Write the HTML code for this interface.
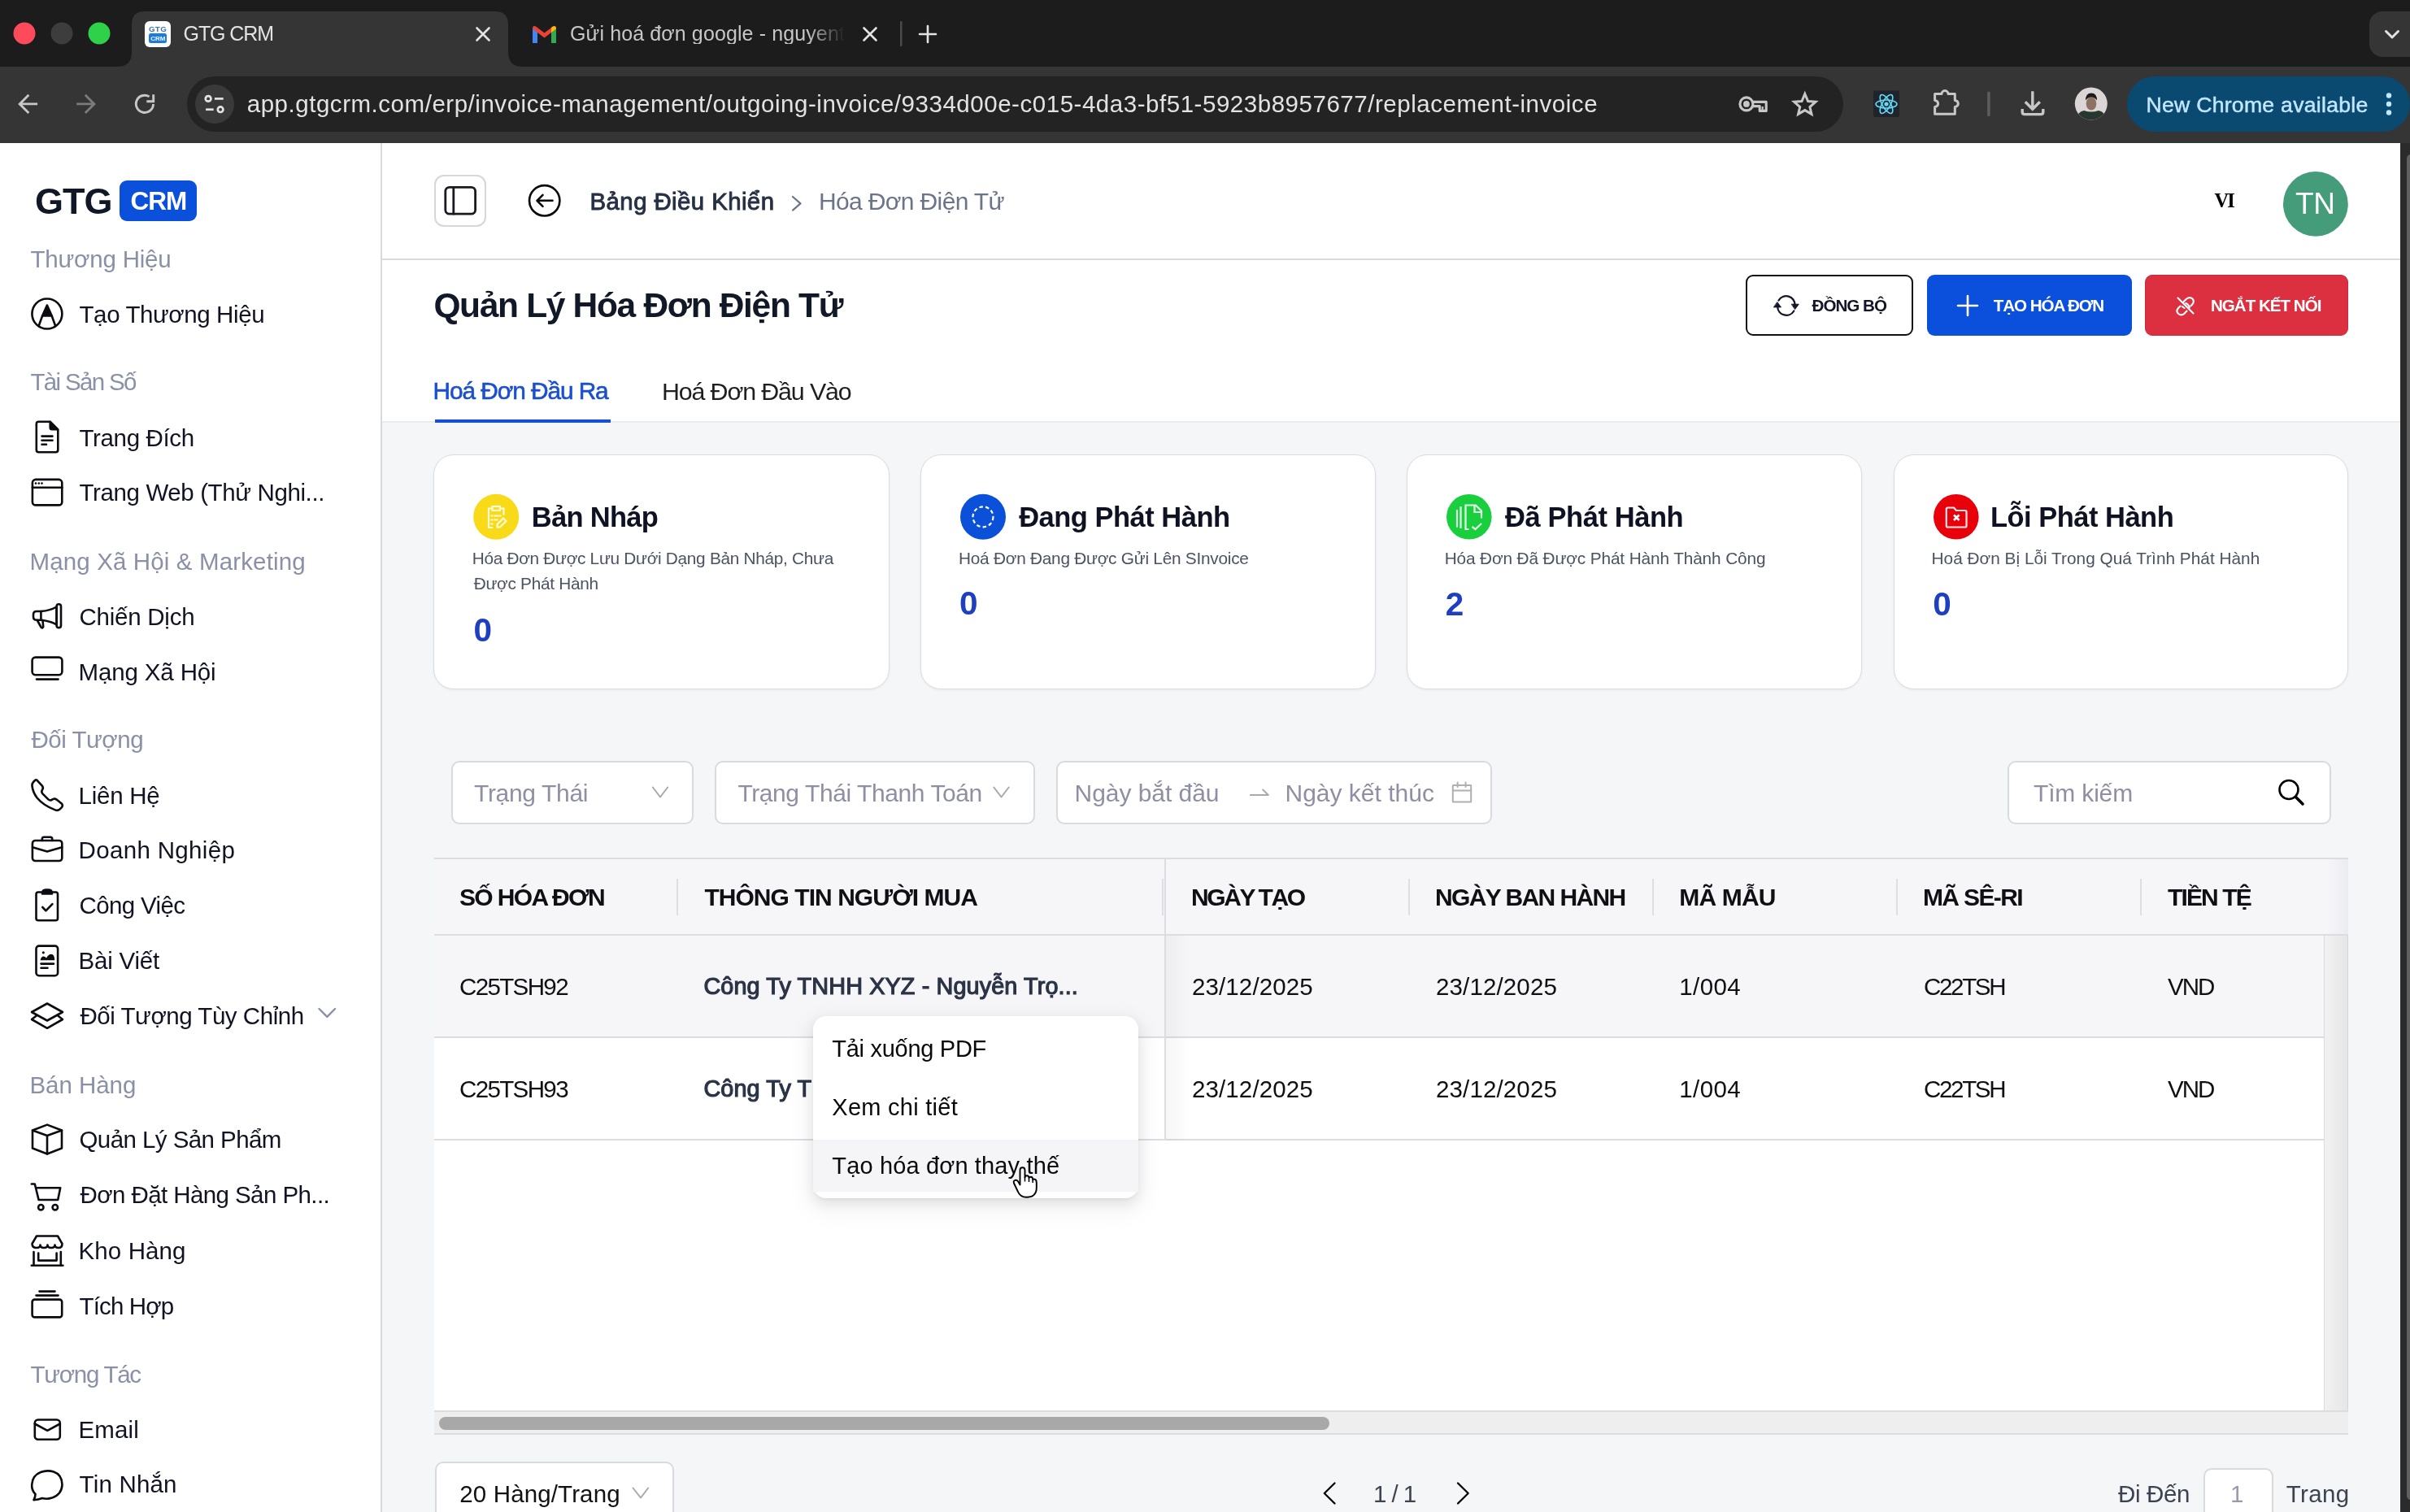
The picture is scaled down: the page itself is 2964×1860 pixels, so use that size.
<!DOCTYPE html><html><head><meta charset="utf-8"><style>
*{margin:0;padding:0;box-sizing:border-box}
html,body{width:2964px;height:1860px;overflow:hidden;background:#fff}
body{position:relative;font-family:'Liberation Sans',sans-serif}
.t{position:absolute;white-space:nowrap}
.b{position:absolute}
svg.ov{position:absolute;left:0;top:0}
.root{position:absolute;left:0;top:0;width:2964px;height:1860px;overflow:hidden;will-change:transform}
</style></head><body><div class="root"><div class="b" style="left:0px;top:0px;width:2964px;height:82px;background:#1c1c1c"></div>
<div class="b" style="left:0px;top:82px;width:2964px;height:94px;background:#353535"></div>
<svg class="ov" width="700" height="82" style="left:0;top:0"><path d="M144 82 Q162 82 162 64 V30 Q162 14 178 14 H609 Q625 14 625 30 V64 Q625 82 643 82 Z" fill="#353535"/></svg>
<svg class="ov" width="160" height="82"><circle cx="30" cy="41" r="13.5" fill="#ff4a5c"/><circle cx="76" cy="41" r="13.5" fill="#3d3d3d"/><circle cx="122" cy="41" r="13.5" fill="#2fd14a"/></svg>
<div class="b" style="left:178px;top:26px;width:32px;height:32px;background:#fff;border-radius:6px"></div>
<div class="t" style="left:182px;top:30.5px;width:24px;text-align:center;font-size:9.8px;line-height:10px;font-weight:700;color:#3d74b8;letter-spacing:0.3px">GTG</div>
<div class="b" style="left:183.4px;top:41.4px;width:21.69999999999999px;height:11.300000000000004px;background:#1f7ae0;border-radius:2.5px"></div>
<div class="t" style="left:183.4px;top:42.6px;width:21.7px;text-align:center;font-size:8px;line-height:9px;font-weight:700;color:#e8fbff">CRM</div>
<div class="t" style="left:225.5px;top:28.6px;font-size:25px;line-height:25px;letter-spacing:-1.066px;color:#e3e3e3;">GTG CRM</div>
<svg class="ov" width="1200" height="82"><g stroke="#e3e3e3" stroke-width="2.6" stroke-linecap="round"><path d="M586.5 34.5 L601.5 49.5 M601.5 34.5 L586.5 49.5"/><path d="M1062.5 34.5 L1077.5 49.5 M1077.5 34.5 L1062.5 49.5"/><path d="M1141 32 V52 M1131 42 H1151"/></g><rect x="1107" y="26" width="2.5" height="31" rx="1" fill="#4a4a4a"/><path d="M655 53 V35 Q655 31 659 32.5 L669.5 40.5 L680 32.5 Q684 31 684 35 V53 H678 V40 L669.5 46.5 L661 40 V53 Z" fill="#ea4335"/><path d="M655 35 V53 H661 V40 Z" fill="#4285f4"/><path d="M684 35 V53 H678 V40 Z" fill="#34a853"/><path d="M678 40 L684 35.5 Q684 31 680 32.5 L678 34 Z" fill="#fbbc04"/></svg>
<div class="t" style="left:701.0px;top:28.6px;font-size:25px;line-height:25px;letter-spacing:0.115px;color:#c7c7c7;-webkit-mask-image:linear-gradient(90deg,#000 0,#000 292px,transparent 338px);">Gửi hoá đơn google - nguyenthanh</div>
<div class="b" style="left:2914px;top:14px;width:66px;height:56px;background:#353535;border-radius:16px"></div>
<svg class="ov" width="2964" height="82"><path d="M2934.5 38.5 L2942 46 L2949.5 38.5" stroke="#e3e3e3" stroke-width="3" fill="none" stroke-linecap="round" stroke-linejoin="round"/></svg>
<svg class="ov" width="2964" height="176"><g fill="none" stroke-linejoin="miter"><path d="M46.1 127.9 H24 M35.3 116.8 L24.2 127.9 L35.3 139.1" stroke="#c7c7c7" stroke-width="2.9"/><path d="M94.2 127.9 H116 M104.8 116.8 L115.9 127.9 L104.8 139.1" stroke="#7b7b7b" stroke-width="2.9"/><path d="M188.5 127.9 A10.6 10.6 0 1 1 183.6 118.9" stroke="#c7c7c7" stroke-width="2.9"/><path d="M180.3 124.7 H188.7 V116.2" stroke="#c7c7c7" stroke-width="2.9"/></g></svg>
<div class="b" style="left:230px;top:94px;width:2037px;height:68px;background:#232323;border-radius:34px"></div>
<svg class="ov" width="2964" height="176"><circle cx="264" cy="128" r="24" fill="#3a3a3a"/><g stroke="#e3e3e3" stroke-width="2.7" fill="none"><circle cx="256.1" cy="121.4" r="3.3"/><path d="M263.9 121.4 H274.7"/><circle cx="271.1" cy="134.7" r="3.3"/><path d="M253.1 134.7 H262.7"/></g><g stroke="#c7c7c7" stroke-width="3.1" fill="none" stroke-linejoin="round"><circle cx="2147.9" cy="127.9" r="8"/><path d="M2155.6 125.4 H2172.2 V136.4 H2164.2 V130.6 H2155.6"/></g><circle cx="2147.9" cy="127.9" r="3.9" fill="#c7c7c7"/><rect x="2166.6" y="131" width="2.2" height="4" fill="#c7c7c7"/><path d="M2219.8 115.5 L2223.6 124.6 L2233 125.3 L2225.9 131.6 L2228 140.4 L2219.8 135.6 L2211.6 140.4 L2213.7 131.6 L2206.6 125.3 L2216 124.6 Z" stroke="#c7c7c7" stroke-width="3" fill="none" stroke-linejoin="miter"/><rect x="2304" y="111.5" width="32" height="32.5" rx="2" fill="#20232a"/><g stroke="#61dafb" stroke-width="1.6" fill="none"><ellipse cx="2320" cy="128" rx="13" ry="5"/><ellipse cx="2320" cy="128" rx="13" ry="5" transform="rotate(60 2320 128)"/><ellipse cx="2320" cy="128" rx="13" ry="5" transform="rotate(-60 2320 128)"/></g><circle cx="2320" cy="128" r="2.6" fill="#61dafb"/><path d="M2379.6 115.6 H2388 A4 4 0 0 1 2396 115.6 H2404.3 V123.4 A4 4 0 0 1 2404.3 131.4 V140.2 H2379.6 V131.4 A4 4 0 0 0 2379.6 123.4 Z" stroke="#c7c7c7" stroke-width="3" fill="none" stroke-linejoin="round"/><rect x="2444.2" y="112.6" width="3.4" height="30.6" rx="1.7" fill="#5e5e5e"/><g stroke="#c7c7c7" stroke-width="3.4" fill="none" stroke-linejoin="miter"><path d="M2499.8 112.2 V133 M2490.8 125.3 L2499.8 134.3 L2508.8 125.3"/><path d="M2487.2 134.1 V137.8 Q2487.2 140.6 2490 140.6 H2510 Q2512.8 140.6 2512.8 137.8 V134.1"/></g><defs><clipPath id="avc"><circle cx="2571.8" cy="127.6" r="20"/></clipPath></defs><g clip-path="url(#avc)"><rect x="2550" y="106" width="44" height="44" fill="#dcd5d5"/><ellipse cx="2572" cy="127.5" rx="6.3" ry="8" fill="#8d7264"/><path d="M2565 123.5 Q2565 114.5 2572 114.5 Q2579 114.5 2579 123.5 Q2576 119.5 2572 119.5 Q2568 119.5 2565 123.5 Z" fill="#1e1b1a"/><path d="M2553 150 Q2554 137.5 2563 136 Q2572 139 2581 136 Q2590 137.5 2591 150 Z" fill="#26382f"/></g></svg>
<div class="t" style="left:303.7px;top:113.0px;font-size:29.5px;line-height:29.5px;letter-spacing:0.533px;color:#e3e3e3;">app.gtgcrm.com/erp/invoice-management/outgoing-invoice/9334d00e-c015-4da3-bf51-5923b8957677/replacement-invoice</div>
<div class="b" style="left:2616px;top:94px;width:348px;height:68px;background:#0b4a70;border-radius:34px"></div>
<div class="t" style="left:2639.5px;top:115.8px;font-size:26.6px;line-height:26.6px;letter-spacing:0.274px;color:#c2e7ff;-webkit-text-stroke:0.45px #c2e7ff;">New Chrome available</div>
<svg class="ov" width="2964" height="176"><g fill="#c2e7ff"><circle cx="2938" cy="117.5" r="3.2"/><circle cx="2938" cy="128" r="3.2"/><circle cx="2938" cy="138.5" r="3.2"/></g></svg>
<div class="b" style="left:0px;top:176px;width:2952px;height:1684px;background:#fff"></div>
<div class="b" style="left:2952px;top:176px;width:12px;height:1684px;background:#2b2b2b"></div>
<div class="b" style="left:2960px;top:190px;width:10px;height:1655px;background:#606060;border-radius:5px"></div>
<div class="b" style="left:468px;top:176px;width:2px;height:1684px;background:#d8d8df"></div>
<div class="t" style="left:43.0px;top:224.9px;font-size:45px;line-height:45px;font-weight:700;letter-spacing:-1.0px;color:#101828;">GTG</div>
<div class="b" style="left:147px;top:222px;width:95px;height:49.5px;background:#0b50da;border-radius:9px"></div>
<div class="t" style="left:160.5px;top:231.7px;font-size:31.5px;line-height:31.5px;font-weight:700;letter-spacing:-1.0px;color:#ffffff;">CRM</div>
<div class="t" style="left:37.5px;top:304.0px;font-size:29.5px;line-height:29.5px;letter-spacing:-0.2px;color:#8a91a6;">Thương Hiệu</div>
<div class="t" style="left:37.5px;top:455.0px;font-size:29.5px;line-height:29.5px;letter-spacing:-1.667px;color:#8a91a6;">Tài Sản Số</div>
<div class="t" style="left:36.5px;top:676.0px;font-size:29.5px;line-height:29.5px;letter-spacing:0.136px;color:#8a91a6;">Mạng Xã Hội & Marketing</div>
<div class="t" style="left:38.5px;top:895.0px;font-size:29.5px;line-height:29.5px;letter-spacing:-0.476px;color:#8a91a6;">Đối Tượng</div>
<div class="t" style="left:36.5px;top:1320.0px;font-size:29.5px;line-height:29.5px;letter-spacing:-0.057px;color:#8a91a6;">Bán Hàng</div>
<div class="t" style="left:37.5px;top:1676.0px;font-size:29.5px;line-height:29.5px;letter-spacing:-1.274px;color:#8a91a6;">Tương Tác</div>
<div class="t" style="left:97.5px;top:372.0px;font-size:29.5px;line-height:29.5px;letter-spacing:-0.4px;color:#111322;">Tạo Thương Hiệu</div>
<div class="t" style="left:97.5px;top:524.0px;font-size:29.5px;line-height:29.5px;letter-spacing:-0.355px;color:#111322;">Trang Đích</div>
<div class="t" style="left:97.5px;top:591.4px;font-size:29.5px;line-height:29.5px;letter-spacing:-0.381px;color:#111322;">Trang Web (Thử Nghi...</div>
<div class="t" style="left:97.5px;top:743.6px;font-size:29.5px;line-height:29.5px;letter-spacing:-0.244px;color:#111322;">Chiến Dịch</div>
<div class="t" style="left:96.5px;top:811.6px;font-size:29.5px;line-height:29.5px;letter-spacing:-0.14px;color:#111322;">Mạng Xã Hội</div>
<div class="t" style="left:96.5px;top:963.5px;font-size:29.5px;line-height:29.5px;letter-spacing:-0.234px;color:#111322;">Liên Hệ</div>
<div class="t" style="left:96.5px;top:1031.0px;font-size:29.5px;line-height:29.5px;letter-spacing:0.345px;color:#111322;">Doanh Nghiệp</div>
<div class="t" style="left:97.5px;top:1099.0px;font-size:29.5px;line-height:29.5px;letter-spacing:-0.626px;color:#111322;">Công Việc</div>
<div class="t" style="left:96.5px;top:1167.0px;font-size:29.5px;line-height:29.5px;letter-spacing:-0.2px;color:#111322;">Bài Viết</div>
<div class="t" style="left:98.5px;top:1234.7px;font-size:29.5px;line-height:29.5px;letter-spacing:-0.466px;color:#111322;">Đối Tượng Tùy Chỉnh</div>
<div class="t" style="left:97.5px;top:1387.4px;font-size:29.5px;line-height:29.5px;letter-spacing:-0.573px;color:#111322;">Quản Lý Sản Phẩm</div>
<div class="t" style="left:98.5px;top:1455.3px;font-size:29.5px;line-height:29.5px;letter-spacing:-0.581px;color:#111322;">Đơn Đặt Hàng Sản Ph...</div>
<div class="t" style="left:96.5px;top:1523.6px;font-size:29.5px;line-height:29.5px;letter-spacing:0.115px;color:#111322;">Kho Hàng</div>
<div class="t" style="left:97.5px;top:1591.5px;font-size:29.5px;line-height:29.5px;letter-spacing:-0.857px;color:#111322;">Tích Hợp</div>
<div class="t" style="left:96.5px;top:1744.0px;font-size:29.5px;line-height:29.5px;letter-spacing:0.15px;color:#111322;">Email</div>
<div class="t" style="left:97.5px;top:1811.4px;font-size:29.5px;line-height:29.5px;letter-spacing:0.2px;color:#111322;">Tin Nhắn</div>
<svg class="ov" width="470" height="1860"><g fill="none" stroke="#0b0b12" stroke-width="2.6" stroke-linecap="round" stroke-linejoin="round"><circle cx="57.9" cy="386" r="18.5"/><path d="M47.8 400.5 L52.2 388.3 H63.6 L68 400.5"/><path d="M57.9 375.5 L52.2 388.3 H63.6 Z" fill="#0b0b12"/><path d="M44.8 521.5 Q44.8 518.8 47.5 518.8 H61.7 L71.3 528.5 V553.5 Q71.3 556.2 68.6 556.2 H47.5 Q44.8 556.2 44.8 553.5 Z"/><path d="M61.7 519 V526 Q61.7 528.3 64 528.3 H71 Z" fill="#0b0b12"/><path d="M51.5 536.6 H64.5 M51.5 541.7 H64.5 M51.5 546.7 H57"/><rect x="39.9" y="589.9" width="36.4" height="31.5" rx="4"/><path d="M39.9 599.7 H76.3"/></g><g fill="#0b0b12"><circle cx="44" cy="594.6" r="1.3"/><circle cx="47.8" cy="594.6" r="1.3"/><circle cx="51.5" cy="594.6" r="1.3"/></g><g fill="none" stroke="#0b0b12" stroke-width="2.6" stroke-linecap="round" stroke-linejoin="round"><path d="M50.4 752 H45 Q41 752 41 756 V758.8 Q41 762.8 45 762.8 H50.4 Z"/><path d="M50.4 752 Q62 751 69.6 746.5 V768.5 Q62 764 50.4 762.8"/><rect x="69.6" y="743.2" width="5.4" height="29" rx="2.7"/><path d="M45.8 763 L50.5 771.5 Q52.5 773.5 53.2 771 L52.5 763"/><rect x="39.6" y="808.6" width="36.8" height="21.6" rx="4"/><path d="M45 835.6 H71.5"/><path d="M45.3 959.6 L51.8 966.6 Q53.6 968.8 52.3 971 L51.6 972.4 Q50.6 974.4 52.6 976.6 L59.4 983.4 Q61.4 985.2 63.5 984 L65 983.2 Q67.4 982 69.6 983.6 L76 988.8 Q77.6 990.8 76.2 992.8 L73.2 995.8 Q71 997.6 67.8 996.4 Q53 990.5 45.6 981.5 Q40.4 974.6 39.5 967 Q39.2 963.8 41 962 L43 960 Q44.2 958.8 45.3 959.6 Z"/><rect x="39.9" y="1034" width="36.4" height="25" rx="3.5"/><path d="M39.9 1042.3 L58 1047.5 L76.3 1042.3"/><path d="M51.8 1034 V1032 Q51.8 1029.8 54 1029.8 H62 Q64.2 1029.8 64.2 1032 V1034"/><path d="M51 1097.5 H47 Q44.5 1097.5 44.5 1100 V1129.8 Q44.5 1132.3 47 1132.3 H68.5 Q71 1132.3 71 1129.8 V1100 Q71 1097.5 68.5 1097.5 H65"/><path d="M52 1099.5 Q52 1094.5 56 1094.5 H60 Q64 1094.5 64 1099.5 Z" fill="#0b0b12"/><path d="M52.3 1116 L56.4 1120.4 L64.4 1112.2"/><rect x="44.5" y="1163.6" width="26.6" height="36.6" rx="3.5"/><path d="M50.5 1185.6 H66 M50.5 1190.7 H58.5"/><circle cx="53.3" cy="1171.8" r="1.6" fill="#0b0b12" stroke="none"/><path d="M49.6 1181.3 Q50.5 1176.5 53.5 1176.5 Q55.5 1176.5 57 1178.5 Q59.5 1173.8 63 1173.8 Q67.2 1174.2 67.2 1181.3 Z" fill="#0b0b12" stroke="none"/><path d="M58 1234.5 L77 1245 L58 1255.5 L39 1245 Z"/><path d="M44.5 1249.8 L39 1254 L58 1264.8 L77 1254 L71.5 1249.8"/><path d="M58 1383.6 L76 1390.5 V1412.5 L58 1419.5 L40 1412.5 V1390.5 Z"/><path d="M40 1390.5 L58 1397 L76 1390.5 M58 1397 V1419.5"/><path d="M38.8 1456.5 H42.8 L47.6 1476 H71.2 L74.2 1461.2 H45"/><circle cx="50.3" cy="1485.2" r="3.2"/><circle cx="67.8" cy="1485.2" r="3.2"/><path d="M45 1520.5 H71 L76.5 1530 Q76.5 1535 72 1535 Q67.5 1535 67.5 1531.5 Q67.5 1535 63 1535 Q58.5 1535 58.5 1531.5 Q58.5 1535 54 1535 Q49.5 1535 49.5 1531.5 Q49.5 1535 45 1535 Q39.5 1535 39.5 1530 Z"/><path d="M41.5 1540 V1556 M74.8 1540 V1556 M38.8 1556.8 H77.4 M47.2 1541.5 V1550.6 H69.6 V1541.5"/><rect x="39.6" y="1598.6" width="36.6" height="21.8" rx="3"/><path d="M44.5 1593.6 H71.5 M48.5 1588.6 H67.5"/><rect x="42.8" y="1746.5" width="31" height="24.2" rx="4"/><path d="M42.8 1751.5 L58.3 1759.8 L73.8 1751.5"/><path d="M43.5 1838 Q38.6 1833 39.2 1826 Q40 1815 50 1811 Q58 1808 66 1810.5 Q76.2 1814 76.5 1826.2 Q76.2 1838 64 1842.6 Q58 1844.6 52 1843 Q47 1845 41.5 1845.2 Q43.5 1841.8 43.5 1838 Z"/></g><path d="M392.5 1241 L402.3 1250.8 L412 1241" stroke="#8a91a6" stroke-width="2.4" fill="none" stroke-linecap="round" stroke-linejoin="round"/></svg>
<div class="b" style="left:470px;top:318px;width:2482px;height:2px;background:#d9d9de"></div>
<div class="b" style="left:534.3px;top:215.1px;width:63.5px;height:63.50000000000003px;border:2px solid #d6d6db;border-radius:12px;background:#fff"></div>
<svg class="ov" width="2952" height="320"><g fill="none" stroke="#1a1a22" stroke-width="2.8" stroke-linecap="round" stroke-linejoin="round"><rect x="547.8" y="230.4" width="36.8" height="32.8" rx="5"/><path d="M557.8 230.4 V263.2"/></g><g fill="none" stroke="#0a0a0a" stroke-width="2.6" stroke-linecap="round" stroke-linejoin="round"><circle cx="669.7" cy="246.8" r="18.7"/><path d="M679.5 246.8 H660.5 M667.5 239.8 L660.5 246.8 L667.5 253.8"/></g><path d="M975 242 L984.5 250.3 L975 258.6" stroke="#6b7489" stroke-width="2.2" fill="none" stroke-linecap="round" stroke-linejoin="round"/><circle cx="2847.9" cy="250.9" r="39.9" fill="#459c7a"/></svg>
<div class="t" style="left:725.6px;top:233.3px;font-size:29.4px;line-height:29.4px;letter-spacing:0.414px;color:#253044;-webkit-text-stroke:0.9px #253044;">Bảng Điều Khiển</div>
<div class="t" style="left:1007.0px;top:233.0px;font-size:30px;line-height:30px;letter-spacing:-0.643px;color:#6b7489;">Hóa Đơn Điện Tử</div>
<div class="t" style="left:2723.5px;top:235.2px;font-size:24.5px;line-height:24.5px;font-weight:700;letter-spacing:-2.0px;color:#000000;font-family:'Liberation Serif', serif;">VI</div>
<div class="t" style="left:2823.0px;top:232.0px;font-size:37px;line-height:37px;letter-spacing:-0.4px;color:#ffffff;">TN</div>
<div class="t" style="left:533.4px;top:355.1px;font-size:42.5px;line-height:42.5px;font-weight:700;letter-spacing:-1.328px;color:#111827;">Quản Lý Hóa Đơn Điện Tử</div>
<div class="t" style="left:532.6px;top:465.8px;font-size:29.8px;line-height:29.8px;letter-spacing:-1.061px;color:#1a4fcf;-webkit-text-stroke:0.6px #1a4fcf;">Hoá Đơn Đầu Ra</div>
<div class="t" style="left:813.9px;top:465.5px;font-size:30.4px;line-height:30.4px;letter-spacing:-1.129px;color:#1f1f1f;">Hoá Đơn Đầu Vào</div>
<div class="b" style="left:470px;top:518px;width:2482px;height:2px;background:#ececec"></div>
<div class="b" style="left:534.5px;top:516px;width:216.5px;height:4px;background:#1550d6"></div>
<div class="b" style="left:2147.3px;top:338px;width:206.19999999999982px;height:75.39999999999998px;border:2.6px solid #111;border-radius:9px;background:#fff"></div>
<div class="b" style="left:2369.8px;top:338px;width:252.19999999999982px;height:75.39999999999998px;background:#0b50dc;border-radius:9px"></div>
<div class="b" style="left:2638px;top:338px;width:249.80000000000018px;height:75.39999999999998px;background:#dc3041;border-radius:9px;border:1.5px solid #c82a3a"></div>
<div class="t" style="left:2228.6px;top:365.5px;font-size:20.6px;line-height:20.6px;font-weight:700;letter-spacing:-1.0px;color:#15152a;">ĐỒNG BỘ</div>
<div class="t" style="left:2451.8px;top:365.5px;font-size:20.6px;line-height:20.6px;font-weight:700;letter-spacing:-1.08px;color:#ffffff;">TẠO HÓA ĐƠN</div>
<div class="t" style="left:2719.0px;top:365.5px;font-size:20.6px;line-height:20.6px;font-weight:700;letter-spacing:-1.018px;color:#ffffff;">NGẮT KẾT NỐI</div>
<svg class="ov" width="2952" height="520"><g fill="none" stroke-linecap="round" stroke-linejoin="round"><path d="M2187.5 369.5 A10.8 10.8 0 0 1 2207.6 375" stroke="#15152a" stroke-width="2.3"/><path d="M2203.6 374.2 L2212.2 374.2 L2207.8 380.2 Z" fill="#15152a" stroke="#15152a" stroke-width="1"/><path d="M2206.3 382.5 A10.8 10.8 0 0 1 2186.2 377.2" stroke="#15152a" stroke-width="2.3"/><path d="M2181.8 377.9 L2190.4 377.9 L2186 371.9 Z" fill="#15152a" stroke="#15152a" stroke-width="1"/><path d="M2420 364 V388 M2408 376 H2432" stroke="#fff" stroke-width="2.6"/><g stroke="#fff" stroke-width="2.1"><path d="M2678.5 366.5 L2697.5 385.5"/><path d="M2685 371.8 L2689 367.8 Q2693 364.5 2696.5 367.5 Q2699.5 371 2696 374.8 L2694.2 376.5"/><path d="M2688.2 373 Q2692 374.5 2692.6 378.6"/><path d="M2681.5 376.5 L2679 379 Q2675.8 383 2679.2 386 Q2682.8 389 2686.5 385.8 L2689.5 382.5"/><path d="M2683.8 377 L2686.5 379"/></g></g></svg>
<div class="b" style="left:470px;top:520px;width:2482px;height:1340px;background:#f5f6f8"></div>
<div class="b" style="left:533.2px;top:559px;width:560.7px;height:289.29999999999995px;background:#fff;border:1.5px solid #dcdce0;border-radius:25px;box-shadow:0 1px 3px rgba(0,0,0,0.06)"></div>
<div class="b" style="left:1131.9px;top:559px;width:560.0px;height:289.29999999999995px;background:#fff;border:1.5px solid #dcdce0;border-radius:25px;box-shadow:0 1px 3px rgba(0,0,0,0.06)"></div>
<div class="b" style="left:1729.9px;top:559px;width:560.5999999999999px;height:289.29999999999995px;background:#fff;border:1.5px solid #dcdce0;border-radius:25px;box-shadow:0 1px 3px rgba(0,0,0,0.06)"></div>
<div class="b" style="left:2328.9px;top:559px;width:559.5999999999999px;height:289.29999999999995px;background:#fff;border:1.5px solid #dcdce0;border-radius:25px;box-shadow:0 1px 3px rgba(0,0,0,0.06)"></div>
<div class="t" style="left:653.7px;top:619.1px;font-size:34.5px;line-height:34.5px;font-weight:700;letter-spacing:-0.686px;color:#0f1222;">Bản Nháp</div>
<div class="t" style="left:1253.2px;top:619.1px;font-size:34.5px;line-height:34.5px;font-weight:700;letter-spacing:-0.508px;color:#0f1222;">Đang Phát Hành</div>
<div class="t" style="left:1851.0px;top:619.1px;font-size:34.5px;line-height:34.5px;font-weight:700;letter-spacing:-0.418px;color:#0f1222;">Đã Phát Hành</div>
<div class="t" style="left:2448.0px;top:619.1px;font-size:34.5px;line-height:34.5px;font-weight:700;letter-spacing:-0.516px;color:#0f1222;">Lỗi Phát Hành</div>
<div class="t" style="left:580.7px;top:677.3px;font-size:20.8px;line-height:20.8px;letter-spacing:-0.289px;color:#4b5262;">Hóa Đơn Được Lưu Dưới Dạng Bản Nháp, Chưa</div>
<div class="t" style="left:582.7px;top:707.9px;font-size:20.8px;line-height:20.8px;letter-spacing:-0.277px;color:#4b5262;">Được Phát Hành</div>
<div class="t" style="left:1179.0px;top:677.3px;font-size:20.8px;line-height:20.8px;letter-spacing:-0.243px;color:#4b5262;">Hoá Đơn Đang Được Gửi Lên SInvoice</div>
<div class="t" style="left:1776.7px;top:677.3px;font-size:20.8px;line-height:20.8px;letter-spacing:-0.126px;color:#4b5262;">Hóa Đơn Đã Được Phát Hành Thành Công</div>
<div class="t" style="left:2375.6px;top:677.3px;font-size:20.8px;line-height:20.8px;letter-spacing:0.01px;color:#4b5262;">Hoá Đơn Bị Lỗi Trong Quá Trình Phát Hành</div>
<div class="t" style="left:582.5px;top:754.7px;font-size:40.5px;line-height:40.5px;font-weight:700;color:#1e3fc0;">0</div>
<div class="t" style="left:1180.0px;top:722.3px;font-size:40.5px;line-height:40.5px;font-weight:700;color:#1e3fc0;">0</div>
<div class="t" style="left:1777.7px;top:723.2px;font-size:40.5px;line-height:40.5px;font-weight:700;color:#1e3fc0;">2</div>
<div class="t" style="left:2377.2px;top:723.2px;font-size:40.5px;line-height:40.5px;font-weight:700;color:#1e3fc0;">0</div>
<svg class="ov" width="2952" height="900"><circle cx="610.2" cy="635.8" r="28" fill="#f8da18"/><circle cx="1209" cy="635.8" r="28" fill="#0b50d9"/><circle cx="1806.8" cy="635.8" r="27.8" fill="#19cf3d"/><circle cx="2405.8" cy="635.8" r="27.8" fill="#e8000b"/><g fill="none" stroke="#fffbd6" stroke-width="2.2" stroke-linecap="square"><path d="M604 625.5 H601 V649 H605 M616 625.5 H619.5 V632.5"/><rect x="605.5" y="623" width="9.5" height="5"/><path d="M604.5 634.5 H605.5 M608.5 634.5 H615.5 M604.5 639.5 H605.5 M608.5 639.5 H611.5 M604.5 644.5 H605.5"/><path d="M611.5 648.5 V645 L619 637.5 L622.5 641 L615 648.5 Z"/></g><g fill="none" stroke="#fff" stroke-width="2.2" stroke-dasharray="4.5 3.2"><circle cx="1209" cy="635.8" r="12.5"/></g><g fill="none" stroke="#e6ffe8" stroke-width="2.2"><path d="M1792 627 V648.5 M1796.5 623 V650"/><path d="M1806.5 651 H1802.5 V621.5 H1815 L1822 628.5 V637.5"/><path d="M1813.5 622 V630 H1821.5"/><path d="M1810.5 648 L1814.5 651 L1822 644"/></g><g fill="none" stroke="#ffe8ea" stroke-width="2.2" stroke-linejoin="round"><path d="M2393.8 626 Q2393.8 624.5 2395.5 624.5 H2403 L2406 628 H2417 Q2418.5 628 2418.5 629.5 V647 Q2418.5 648.5 2417 648.5 H2395.5 Q2393.8 648.5 2393.8 647 Z"/><path d="M2403 633.5 L2409.5 640 M2409.5 633.5 L2403 640" stroke="#fff" stroke-width="2.6"/></g></svg>
<div class="b" style="left:555px;top:935.6px;width:297.70000000000005px;height:78.39999999999998px;background:#fff;border:2px solid #dadade;border-radius:10px"></div>
<div class="b" style="left:878.6px;top:935.6px;width:394.9px;height:78.39999999999998px;background:#fff;border:2px solid #dadade;border-radius:10px"></div>
<div class="b" style="left:1298.7px;top:935.6px;width:536.5px;height:78.39999999999998px;background:#fff;border:2px solid #dadade;border-radius:10px"></div>
<div class="b" style="left:2468.7px;top:935.6px;width:398.60000000000036px;height:78.39999999999998px;background:#fff;border:2px solid #dadade;border-radius:10px"></div>
<div class="t" style="left:583.0px;top:961.0px;font-size:30px;line-height:30px;letter-spacing:-0.333px;color:#8f8fa3;">Trạng Thái</div>
<div class="t" style="left:907.4px;top:961.0px;font-size:30px;line-height:30px;letter-spacing:-0.41px;color:#8f8fa3;">Trạng Thái Thanh Toán</div>
<div class="t" style="left:1321.6px;top:960.6px;font-size:30px;line-height:30px;letter-spacing:-0.054px;color:#8f8fa3;">Ngày bắt đầu</div>
<div class="t" style="left:1580.5px;top:960.6px;font-size:30px;line-height:30px;color:#8f8fa3;">Ngày kết thúc</div>
<div class="t" style="left:2501.0px;top:960.6px;font-size:30px;line-height:30px;letter-spacing:-0.171px;color:#8f8fa3;">Tìm kiếm</div>
<svg class="ov" width="2952" height="1100"><g fill="none" stroke="#a8a8a8" stroke-width="2" stroke-linecap="round" stroke-linejoin="round"><path d="M802.8 968.5 L812 980.5 L821.2 968.5"/><path d="M1222.3 968.5 L1231.5 980.5 L1240.7 968.5"/><path d="M1537.8 978 H1559.8 L1553.2 971.5" stroke="#aaaaaa" stroke-width="2"/><rect x="1786.8" y="966" width="22.4" height="20.6" rx="0.5" stroke="#b0b0b0" stroke-width="2"/><path d="M1786.8 972.5 H1809.2 M1792.6 962.5 V968 M1802.6 962.5 V968" stroke="#b0b0b0" stroke-width="2"/></g><g fill="none" stroke="#000" stroke-linecap="round"><circle cx="2815" cy="971.5" r="11.5" stroke-width="2.6"/><path d="M2823.5 980.5 L2832 989" stroke-width="3.6"/></g></svg>
<div class="b" style="left:534px;top:1055px;width:2353.7px;height:2px;background:#dcdce3"></div>
<div class="b" style="left:534px;top:1057px;width:2353.7px;height:92px;background:linear-gradient(90deg,#f6f6f9 0,#f6f6f9 2328px,#ececf0 2353.7px)"></div>
<div class="b" style="left:534px;top:1149px;width:2353.7px;height:2px;background:#dcdce3"></div>
<div class="b" style="left:534px;top:1151px;width:2325px;height:124px;background:#f6f6f9"></div>
<div class="b" style="left:534px;top:1275px;width:2325px;height:2px;background:#dcdce3"></div>
<div class="b" style="left:534px;top:1277px;width:2325px;height:124px;background:#fff"></div>
<div class="b" style="left:534px;top:1401px;width:2325px;height:2px;background:#dcdce3"></div>
<div class="b" style="left:534px;top:1403px;width:2325px;height:332px;background:#fff"></div>
<div class="b" style="left:2858.3px;top:1151px;width:29.399999999999636px;height:584px;background:linear-gradient(90deg,#f1f1f1,#e6e6e6);border-left:1.5px solid #dadada;border-right:1.5px solid #d6d6d6"></div>
<div class="b" style="left:534px;top:1735px;width:2353.7px;height:30px;background:#eeeeee;border-top:2px solid #dcdcdc;border-bottom:2px solid #dcdcdc"></div>
<div class="b" style="left:540px;top:1743px;width:1094.7px;height:16px;background:#a8a8a8;border-radius:8px"></div>
<div class="b" style="left:1434px;top:1151px;width:30px;height:252px;background:linear-gradient(90deg,rgba(0,0,0,0.035),rgba(0,0,0,0))"></div>
<div class="b" style="left:1432px;top:1057px;width:2px;height:346px;background:#dcdce3"></div>
<div class="b" style="left:831.8px;top:1080.5px;width:2.0px;height:45.0px;background:#dedee5"></div>
<div class="b" style="left:1732px;top:1080.5px;width:2px;height:45.0px;background:#dedee5"></div>
<div class="b" style="left:2031.7px;top:1080.5px;width:2.0px;height:45.0px;background:#dedee5"></div>
<div class="b" style="left:2332.1px;top:1080.5px;width:2.0px;height:45.0px;background:#dedee5"></div>
<div class="b" style="left:2631.7px;top:1080.5px;width:2.0px;height:45.0px;background:#dedee5"></div>
<div class="b" style="left:1428.5px;top:1080.5px;width:2.0px;height:45.0px;background:#dedee5"></div>
<div class="t" style="left:565.0px;top:1088.8px;font-size:30px;line-height:30px;font-weight:700;letter-spacing:-1.645px;color:#0f0f14;">SỐ HÓA ĐƠN</div>
<div class="t" style="left:866.4px;top:1088.8px;font-size:30px;line-height:30px;font-weight:700;letter-spacing:-0.956px;color:#0f0f14;">THÔNG TIN NGƯỜI MUA</div>
<div class="t" style="left:1465.0px;top:1088.8px;font-size:30px;line-height:30px;font-weight:700;letter-spacing:-2.4px;color:#0f0f14;">NGÀY TẠO</div>
<div class="t" style="left:1765.0px;top:1088.8px;font-size:30px;line-height:30px;font-weight:700;letter-spacing:-1.6px;color:#0f0f14;">NGÀY BAN HÀNH</div>
<div class="t" style="left:2065.3px;top:1088.8px;font-size:30px;line-height:30px;font-weight:700;letter-spacing:-0.84px;color:#0f0f14;">MÃ MẪU</div>
<div class="t" style="left:2365.0px;top:1088.8px;font-size:30px;line-height:30px;font-weight:700;letter-spacing:-1.628px;color:#0f0f14;">MÃ SÊ-RI</div>
<div class="t" style="left:2666.0px;top:1088.8px;font-size:30px;line-height:30px;font-weight:700;letter-spacing:-1.866px;color:#0f0f14;">TIỀN TỆ</div>
<div class="t" style="left:565.0px;top:1199.0px;font-size:29.5px;line-height:29.5px;letter-spacing:-1.628px;color:#0f0f14;">C25TSH92</div>
<div class="t" style="left:865.4px;top:1199.2px;font-size:28.8px;line-height:28.8px;letter-spacing:0.123px;color:#2b3446;-webkit-text-stroke:1.2px #2b3446;">Công Ty TNHH XYZ - Nguyễn Trọ...</div>
<div class="t" style="left:1466.0px;top:1199.0px;font-size:29.5px;line-height:29.5px;letter-spacing:0.111px;color:#0f0f14;">23/12/2025</div>
<div class="t" style="left:1766.0px;top:1199.0px;font-size:29.5px;line-height:29.5px;letter-spacing:0.134px;color:#0f0f14;">23/12/2025</div>
<div class="t" style="left:2065.3px;top:1199.0px;font-size:29.5px;line-height:29.5px;letter-spacing:0.4px;color:#0f0f14;">1/004</div>
<div class="t" style="left:2366.0px;top:1199.0px;font-size:29.5px;line-height:29.5px;letter-spacing:-2.32px;color:#0f0f14;">C22TSH</div>
<div class="t" style="left:2666.0px;top:1199.0px;font-size:29.5px;line-height:29.5px;letter-spacing:-2.0px;color:#0f0f14;">VND</div>
<div class="t" style="left:565.0px;top:1325.0px;font-size:29.5px;line-height:29.5px;letter-spacing:-1.628px;color:#0f0f14;">C25TSH93</div>
<div class="t" style="left:865.4px;top:1325.2px;font-size:28.8px;line-height:28.8px;letter-spacing:0.123px;color:#2b3446;-webkit-text-stroke:1.2px #2b3446;">Công Ty TNHH XYZ - Nguyễn Trọ...</div>
<div class="t" style="left:1466.0px;top:1325.0px;font-size:29.5px;line-height:29.5px;letter-spacing:0.111px;color:#0f0f14;">23/12/2025</div>
<div class="t" style="left:1766.0px;top:1325.0px;font-size:29.5px;line-height:29.5px;letter-spacing:0.134px;color:#0f0f14;">23/12/2025</div>
<div class="t" style="left:2065.3px;top:1325.0px;font-size:29.5px;line-height:29.5px;letter-spacing:0.4px;color:#0f0f14;">1/004</div>
<div class="t" style="left:2366.0px;top:1325.0px;font-size:29.5px;line-height:29.5px;letter-spacing:-2.32px;color:#0f0f14;">C22TSH</div>
<div class="t" style="left:2666.0px;top:1325.0px;font-size:29.5px;line-height:29.5px;letter-spacing:-2.0px;color:#0f0f14;">VND</div>
<div class="b" style="left:1000px;top:1249.7px;width:400px;height:224.0999999999999px;background:#fff;border-radius:16px;box-shadow:0 6px 16px rgba(0,0,0,0.08),0 3px 6px -4px rgba(0,0,0,0.12),0 9px 28px 8px rgba(0,0,0,0.05)"></div>
<div class="b" style="left:1000px;top:1401.8px;width:400px;height:64.10000000000014px;background:#f5f5f7"></div>
<div class="t" style="left:1023.3px;top:1276.0px;font-size:29px;line-height:29px;letter-spacing:-0.284px;color:#0a0a0a;">Tải xuống PDF</div>
<div class="t" style="left:1023.3px;top:1348.0px;font-size:29px;line-height:29px;letter-spacing:0.273px;color:#0a0a0a;">Xem chi tiết</div>
<div class="t" style="left:1023.3px;top:1420.2px;font-size:29px;line-height:29px;letter-spacing:0.147px;color:#0a0a0a;">Tạo hóa đơn thay thế</div>
<svg class="ov" width="1400" height="1500"><path d="M1254.5 1457.5 V1439.5 Q1254.5 1436.3 1257.5 1436.3 Q1260.5 1436.3 1260.5 1439.5 V1448.5 Q1260.8 1446.2 1263 1446.2 Q1265.3 1446.2 1265.5 1449 Q1266 1447.8 1267.8 1447.8 Q1270 1447.8 1270.2 1451 Q1270.8 1450.4 1272.5 1450.6 Q1274.8 1451 1274.8 1455 V1461 Q1274.8 1472.8 1262.5 1472.8 Q1254.5 1472.8 1251.5 1465 L1247 1455.5 Q1246 1452.5 1248.5 1451.8 Q1250.8 1451.3 1252.2 1453.5 Z" fill="#fff" stroke="#000" stroke-width="1.9" stroke-linejoin="round"/><path d="M1260.5 1448 V1453.5 M1265.5 1449 V1454 M1270.2 1451 V1455" stroke="#000" stroke-width="1.5" fill="none"/></svg>
<div class="b" style="left:534.6px;top:1797.6px;width:294.4px;height:82.40000000000009px;background:#fff;border:2px solid #d9d9de;border-radius:10px"></div>
<div class="b" style="left:2710px;top:1805.6px;width:86.40000000000009px;height:74.40000000000009px;background:#fff;border:2px solid #d9d9de;border-radius:10px"></div>
<div class="t" style="left:565.3px;top:1822.8px;font-size:29.5px;line-height:29.5px;letter-spacing:0.133px;color:#111111;">20 Hàng/Trang</div>
<div class="t" style="left:1689.0px;top:1822.7px;font-size:29.5px;line-height:29.5px;letter-spacing:-1.05px;color:#3e4450;">1 / 1</div>
<div class="t" style="left:2605.0px;top:1822.5px;font-size:29.5px;line-height:29.5px;letter-spacing:-0.36px;color:#3c4350;">Đi Đến</div>
<div class="t" style="left:2743.0px;top:1822.5px;font-size:29.5px;line-height:29.5px;color:#9a9aae;">1</div>
<div class="t" style="left:2811.8px;top:1822.5px;font-size:29.5px;line-height:29.5px;letter-spacing:0.35px;color:#3c4350;">Trang</div>
<svg class="ov" width="2952" height="1860"><g fill="none" stroke-linecap="round" stroke-linejoin="round"><path d="M778.5 1830.5 L788 1842.5 L797.2 1830.5" stroke="#a8a8a8" stroke-width="2"/><path d="M1641.5 1824.5 L1628.8 1837 L1641.5 1849.5" stroke="#000" stroke-width="2.3"/><path d="M1793 1824.5 L1805.7 1837 L1793 1849.5" stroke="#000" stroke-width="2.3"/></g></svg></div></body></html>
